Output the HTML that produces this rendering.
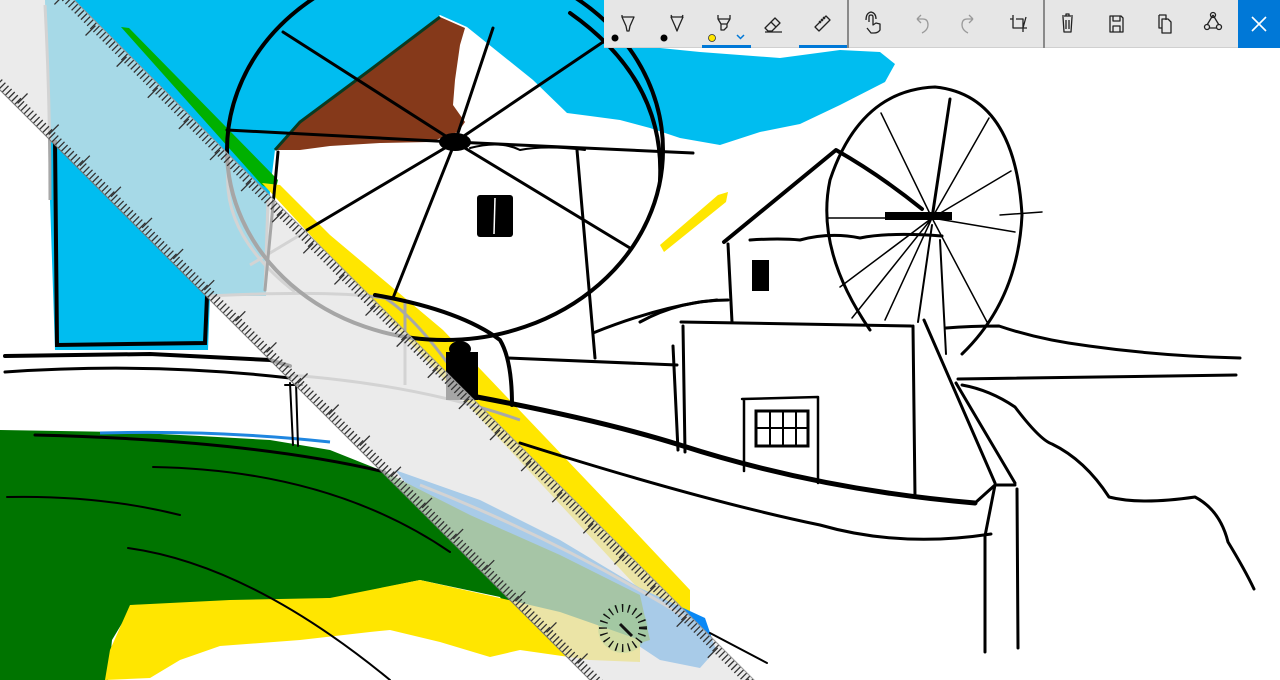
<!DOCTYPE html>
<html><head><meta charset="utf-8"><style>
html,body{margin:0;padding:0;background:#fff;width:1280px;height:680px;overflow:hidden}
svg{display:block;overflow:hidden}
</style></head><body>
<svg width="1280" height="680" viewBox="0 0 1280 680" xmlns="http://www.w3.org/2000/svg">
<rect width="1280" height="680" fill="#fff"/>
<!-- sky -->
<path d="M45,0 H605 V48 H660 L700,52 L780,58 L840,50 L880,52 L895,64 L885,82 L840,105 L800,124 L760,132 L720,145 L680,138 L650,128 L620,120 L590,116 L567,113 L533,80 L467,27 L440,15 L275,150 L270,190 L266,296 L210,296 L208,350 L55,350 L50,200 Z" fill="#00bdf0"/>
<!-- brown roof -->
<path d="M275,150 L300,122 L370,70 L440,17 L465,28 L460,45 L455,80 L453,105 L465,122 L458,132 L430,142 L380,143 L330,146 L300,150 Z" fill="#85391a"/>
<path d="M275,150 L300,122 L370,70 L440,17" fill="none" stroke="#0a3a20" stroke-width="3"/>
<!-- green & yellow stripes -->
<path d="M121,27 L129,28 L278,180 L275,192 L262,185 Z" fill="#00b000"/>
<path d="M262,183 L280,185 L330,235 L443,330 L627,523 L690,590 L690,612 L660,612 Z" fill="#ffe600"/>
<path d="M660,245 L718,195 L728,192 L726,202 L664,252 Z" fill="#ffe600"/>
<!-- blue blob under ruler -->
<path d="M395,470 L480,500 L560,540 L640,588 L705,618 L716,650 L700,668 L660,660 L630,640 L590,620 L540,600 L470,560 Z" fill="#0a88f5"/>
<!-- green field -->
<path d="M0,430 L120,432 L200,436 L270,440 L330,450 L385,472 L470,515 L560,555 L640,595 L650,640 L600,655 L520,630 L500,597 L420,580 L333,598 L227,603 L133,605 L112,640 L108,680 L0,680 Z" fill="#007400"/>
<path d="M100,433 Q220,430 330,442" fill="none" stroke="#1f86e0" stroke-width="3"/>
<path d="M130,605 L230,600 L330,598 L420,580 L500,598 L560,612 L640,640 L640,662 L590,660 L520,650 L490,657 L440,642 L390,630 L370,632 L300,640 L220,646 L180,660 L150,678 L105,680 L110,650 Z" fill="#ffe600"/>
<!-- grey sketch lines -->
<g fill="none" stroke="#a8a8a8" stroke-width="3">
<path d="M230,157 Q215,230 295,292"/>
<path d="M250,265 L300,235"/>
<path d="M45,5 Q50,100 50,200"/>
<path d="M210,296 Q330,290 385,298 Q420,320 470,395"/>
<path d="M268,200 L265,290"/>
<path d="M290,375 Q420,385 520,420"/>
<path d="M420,485 Q560,540 690,620"/>
<path d="M405,300 L405,385"/>
</g>
<!-- black drawing -->
<g fill="none" stroke="#000" stroke-linecap="round" stroke-linejoin="round">
<ellipse cx="445" cy="150" rx="218" ry="190" stroke-width="4"/>
<path d="M570,13 Q665,80 660,180" stroke-width="4"/>
<g stroke-width="3">
<path d="M455,142 L283,32 M455,142 L227,130 M455,142 L693,153 M455,142 L493,28 M455,142 L603,42 M455,142 L630,248 M455,142 L307,230 M455,142 L393,298"/>
</g>
<path d="M470,148 Q500,140 520,150 Q545,145 585,150" stroke-width="2"/>
<path d="M278,152 L265,290 M577,150 L595,358" stroke-width="3"/>
<path d="M375,295 Q460,310 500,340 Q512,360 512,405" stroke-width="4"/>
<path d="M5,356 L150,354 L270,360 L290,366" stroke-width="4"/>
<path d="M5,372 Q150,362 290,378" stroke-width="3"/>
<path d="M477,397 Q600,420 680,445 Q820,490 975,503" stroke-width="5"/>
<path d="M520,443 Q700,500 820,525 Q900,548 991,534" stroke-width="3"/>
<path d="M710,633 L767,663" stroke-width="2"/>
<path d="M507,358 L677,365" stroke-width="3"/>
<path d="M593,333 Q650,310 700,302 L717,300" stroke-width="3"/>
<path d="M640,322 Q680,300 728,300" stroke-width="3"/>
<path d="M290,383 L293,445 M296,383 L298,446 M285,385 L302,385" stroke-width="2"/>
<path d="M35,435 Q250,440 385,472" stroke-width="3"/>
<path d="M153,467 Q330,470 450,552" stroke-width="2"/>
<path d="M7,497 Q100,495 180,515" stroke-width="2"/>
<path d="M128,548 Q250,565 390,680" stroke-width="2"/>
<!-- right house -->
<path d="M724,242 L836,150 Q880,175 922,209" stroke-width="4"/>
<path d="M750,240 Q780,238 800,240 Q830,232 860,238 Q890,232 942,236" stroke-width="3"/>
<path d="M728,244 L732,322" stroke-width="3"/>
<path d="M681,322 L911,326 M683,326 L685,452 M913,326 L915,497 M673,346 L678,450" stroke-width="3"/>
<path d="M742,399 L818,397 M744,400 L744,471 M818,397 L818,483" stroke-width="2.5"/>
<path d="M924,320 L995,483 M956,383 L1015,483 M975,503 L995,485 L1015,485 M985,536 L985,652 M1017,489 L1018,648 M995,485 L985,536" stroke-width="3"/>
<path d="M958,379 L1236,375" stroke-width="3"/>
<path d="M946,328 Q970,326 999,326 Q1040,340 1089,346 Q1160,356 1240,358" stroke-width="3"/>
<path d="M962,385 Q990,390 1015,407 Q1040,440 1052,444 Q1085,460 1109,497 Q1140,505 1195,497 Q1220,510 1228,542 Q1245,570 1254,589" stroke-width="3"/>
<path d="M870,330 Q815,250 830,180 Q860,90 935,87 Q1015,95 1022,215 Q1018,300 962,354" stroke-width="3"/>
<g stroke-width="1.5">
<path d="M932,218 L881,113 M932,218 L989,118 M932,218 L1011,171 M932,218 L1015,232 M932,218 L987,322 M932,218 L885,320 M932,218 L840,287 M932,218 L828,218 M932,218 L852,318 M1000,215 L1042,212"/>
</g>
<path d="M932,218 L950,99" stroke-width="3"/>
<path d="M932,225 L918,322 M940,240 L946,354" stroke-width="2"/>
</g>
<!-- solid black fills -->
<rect x="477" y="195" width="36" height="42" rx="3" fill="#000"/>
<line x1="495" y1="198" x2="494" y2="234" stroke="#fff" stroke-width="1.5"/>
<ellipse cx="455" cy="142" rx="16" ry="9" fill="#000"/>
<ellipse cx="460" cy="349" rx="11" ry="8" fill="#000"/>
<rect x="446" y="352" width="32" height="48" fill="#000"/>
<rect x="752" y="260" width="17" height="31" fill="#000"/>
<rect x="885" y="212" width="67" height="8" fill="#000"/>
<g fill="none" stroke="#000" stroke-width="3">
<rect x="756" y="411" width="52" height="35"/>
<path d="M770,411 V446 M783,411 V446 M796,411 V446 M756,428 H808" stroke-width="2"/>
<path d="M55,140 L57,345 L205,343 L207,296" stroke-width="4"/>
</g>
<!-- ruler -->
<g transform="translate(0,90) rotate(45)">
<rect x="-200" y="-116" width="1400" height="116" fill="#e3e3e3" fill-opacity="0.73"/>
<g stroke="#333" fill="none">
<line x1="-200" y1="-4.5" x2="1200" y2="-4.5" stroke-width="9" stroke-dasharray="1.3 3.1"/>
<line x1="-200" y1="-111.5" x2="1200" y2="-111.5" stroke-width="9" stroke-dasharray="1.3 3.1"/>
<line x1="-198.7" y1="-10" x2="1200" y2="-10" stroke-width="14" stroke-dasharray="1.3 42.7"/>
<line x1="-198.7" y1="-106" x2="1200" y2="-106" stroke-width="14" stroke-dasharray="1.3 42.7"/>
</g>
<line x1="-200" y1="0" x2="1200" y2="0" stroke="#777" stroke-width="1"/>
<line x1="-200" y1="-116" x2="1200" y2="-116" stroke="#999" stroke-width="1"/>
</g>
<!-- protractor handle -->
<g transform="translate(623,628)" stroke="#111">
<circle r="25" fill="#9fcf9f" fill-opacity="0.35" stroke="none"/>
<circle r="20" fill="none" stroke-width="8" stroke-dasharray="1.4 4.8"/>
<line x1="-3" y1="-4" x2="9" y2="8" stroke-width="3"/>
</g>
<!-- toolbar -->
<rect x="604" y="0" width="676" height="48" fill="#e6e6e6"/>
<rect x="604" y="47" width="634" height="1" fill="#d0d0d0"/>
<rect x="702" y="45" width="49" height="3" fill="#0078d7"/>
<rect x="799" y="45" width="48" height="3" fill="#0078d7"/>
<rect x="847" y="0" width="2" height="48" fill="#8a8a8a"/>
<rect x="1043" y="0" width="2" height="48" fill="#8a8a8a"/>
<rect x="1238" y="0" width="42" height="48" fill="#0078d7"/>
<path d="M1252,17 L1266,31 M1266,17 L1252,31" stroke="#fff" stroke-width="1.6"/>
<circle cx="615" cy="38" r="3.5" fill="#000"/>
<circle cx="664" cy="38" r="3.5" fill="#000"/>
<circle cx="712" cy="38" r="3.5" fill="#ffe600" stroke="#333" stroke-width="0.8"/>
<path d="M737,35 L740.5,38.5 L744,35" fill="none" stroke="#0078d7" stroke-width="1.5"/>
<g fill="none" stroke="#222" stroke-width="1.3" stroke-linejoin="round">
<path d="M622,17 L634,17 L630,26 L629,31 L627,31 L626,26 Z M622,17 L622,15"/>
<path d="M671,17 L683,17 L679,26 L677,31 L675,26 Z M671,15 L672,17 M683,15 L682,17"/>
<path d="M718,15 L718,19 L730,19 L730,15 M718,19 L721,24 L727,24 L730,19 M721,24 L721,30 L724,30 L727,27 L727,24"/>
<path d="M767,26 L775,18 L780,23 L772,31 L768,31 L765,28 Z M771,22 L776,27 M765,32 L782,32"/>
<path d="M815,27 L826,16 L830,20 L819,31 Z M819,21 L821,23 M821,19 L823,21 M823,17 L825,19"/>
<path d="M869,22 L869,17 Q869,15 871,15 Q873,15 873,17 L873,25 L876,23 L880,24 L880,30 Q878,33 874,33 L871,33 L867,28 M866,20 Q866,13 871,12 Q876,13 876,19"/>
<path d="M1013,15 L1013,28 L1027,28 M1016,19 L1023,19 L1023,32 M1010,19 L1013,19 M1023,28 L1026,17"/>
<path d="M1062,16 L1073,16 M1066,16 L1066,14 L1069,14 L1069,16 M1063,17 L1064,32 L1071,32 L1072,17 M1066,20 L1066,29 M1069,20 L1069,29"/>
<path d="M1110,16 L1121,16 L1123,18 L1123,32 L1110,32 Z M1113,16 L1113,21 L1120,21 L1120,16 M1113,32 L1113,26 L1120,26 L1120,32"/>
<path d="M1159,15 L1166,15 L1166,20 M1159,15 L1159,28 L1162,28 M1162,19 L1168,19 L1171,22 L1171,33 L1162,33 Z"/>
<path d="M1213,15 L1207,25 M1213,15 L1219,25 M1209,28 L1217,28"/>
<circle cx="1213" cy="15" r="2.5"/><circle cx="1207" cy="27" r="2.5"/><circle cx="1219" cy="27" r="2.5"/>
</g>
<g fill="none" stroke="#9a9a9a" stroke-width="1.3">
<path d="M917,19 L921,15 M917,19 L921,23 M917,19 L923,19 Q928,19 928,25 Q928,30 922,33"/>
<path d="M973,19 L969,15 M973,19 L969,23 M973,19 L967,19 Q962,19 962,25 Q962,30 968,33"/>
</g>
</svg>
</body></html>
